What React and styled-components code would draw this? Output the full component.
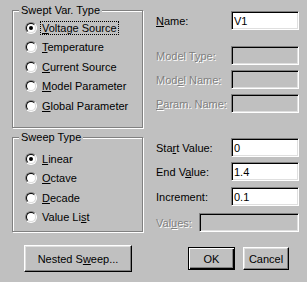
import React from "react"
import styled, { createGlobalStyle, css } from "styled-components"

const GlobalStyle = createGlobalStyle`
    body {
        margin: 0;
        background: #c0c0c0;
    }
`;

const Dialog = styled.div`
    width: 307px;
    height: 282px;
    box-sizing: border-box;
    background: #c0c0c0;
    display: flex;
    padding-left: 12px;
    font-family: "Liberation Sans", Arial, sans-serif;
    font-size: 11px;
    color: #000;
`;

const LeftCol = styled.div`
    width: 131px;
    display: flex;
    flex-direction: column;
    padding-top: 10px;
`;

const RightCol = styled.div`
    width: 143px;
    margin-left: 13px;
    display: flex;
    flex-direction: column;
    padding-top: 11px;
`;

// etched group box
const Group = styled.div`
    position: relative;
    margin-top: ${p => p.$mt || 0}px;
    padding: ${p => p.$pt}px 0 ${p => p.$pb}px 12px;
    border: 1px solid #808080;
    box-shadow: 1px 1px 0 #fff, inset 1px 1px 0 #fff;
`;

// caption sits over the top edge of the group box
const GroupTitle = styled.span`
    position: absolute;
    top: -8px;
    left: 6px;
    padding: 0 2px;
    line-height: 14px;
    background: #c0c0c0;
    white-space: nowrap;
`;

const RadioRow = styled.label`
    display: flex;
    align-items: center;
    gap: 3px;
    height: ${p => p.$h}px;
`;

const RadioOuter = styled.span`
    flex: none;
    width: 12px;
    height: 12px;
    box-sizing: border-box;
    border-radius: 50%;
    border: 1px solid;
    border-color: #808080 #fff #fff #808080;
    display: flex;
`;

const RadioInner = styled.span`
    flex: 1;
    border-radius: 50%;
    border: 1px solid;
    border-color: #000 #dfdfdf #dfdfdf #000;
    background: #fff;
    display: flex;
    align-items: center;
    justify-content: center;
    &::after {
        content: "";
        width: 4px;
        height: 4px;
        border-radius: 50%;
        background: ${p => (p.$checked ? "#000" : "transparent")};
    }
`;

const Caption = styled.span`
    padding: 0 1px;
    line-height: 12px;
    border: 1px dotted ${p => (p.$focus ? "#000" : "transparent")};
    white-space: nowrap;
`;

const Key = styled.u`
    text-decoration: underline;
    text-underline-offset: 1px;
`;

const FieldRow = styled.div`
    display: flex;
    align-items: center;
    height: 19px;
    margin-top: ${p => p.$mt || 0}px;
`;

const FieldLabel = styled.span`
    flex: 0 0 ${p => p.$w}px;
    white-space: nowrap;
    color: ${p => (p.$disabled ? "#808080" : "#000")};
    text-shadow: ${p => (p.$disabled ? "1px 1px 0 #fff" : "none")};
`;

const Edit = styled.input`
    flex: 1;
    min-width: 0;
    height: 19px;
    box-sizing: border-box;
    margin: 0;
    padding: 0 0 0 2px;
    border: 1px solid;
    border-color: #808080 #fff #fff #808080;
    box-shadow: inset 1px 1px 0 #000, inset -1px -1px 0 #dfdfdf;
    background: ${p => (p.disabled ? "#c0c0c0" : "#fff")};
    font: inherit;
    color: #000;
    outline: none;
`;

const Button = styled.button`
    width: ${p => p.$w}px;
    height: ${p => p.$h}px;
    margin: 0;
    padding: 0;
    font: inherit;
    color: #000;
    background: #c0c0c0;
    border: 1px solid;
    border-color: #fff #000 #000 #fff;
    box-shadow: inset -1px -1px 0 #808080, inset 1px 1px 0 #dfdfdf;
    ${p => p.$default && css`
        border-color: #000;
        box-shadow: inset 1px 1px 0 #fff, inset -1px -1px 0 #000, inset -2px -2px 0 #808080;
    `}
`;

const NestedButton = styled(Button)`
    margin: 13px 0 0 12px;
`;

const ButtonRow = styled.div`
    display: flex;
    gap: 8px;
    margin-top: 15px;
    padding-left: 32px;
`;

const SWEPT = [
    { pre: "", key: "V", post: "oltage Source", checked: true, focus: true },
    { pre: "", key: "T", post: "emperature" },
    { pre: "", key: "C", post: "urrent Source" },
    { pre: "", key: "M", post: "odel Parameter" },
    { pre: "", key: "G", post: "lobal Parameter" },
];

const SWEEP = [
    { pre: "", key: "L", post: "inear", checked: true },
    { pre: "", key: "O", post: "ctave" },
    { pre: "", key: "D", post: "ecade" },
    { pre: "Value Li", key: "s", post: "t" },
];

const Radio = ({ item, h }) => (
    <RadioRow $h={h}>
        <RadioOuter>
            <RadioInner $checked={item.checked} />
        </RadioOuter>
        <Caption $focus={item.focus}>
            {item.pre}<Key>{item.key}</Key>{item.post}
        </Caption>
    </RadioRow>
);

const App = () => (
    <Dialog>
        <GlobalStyle />
        <LeftCol>
            <Group $pt={7} $pb={11.5}>
                <GroupTitle>Swept Var. Type</GroupTitle>
                {SWEPT.map((item, i) => <Radio key={i} item={item} h={19.5} />)}
            </Group>
            <Group $mt={9} $pt={11.5} $pb={4.5}>
                <GroupTitle>Sweep Type</GroupTitle>
                {SWEEP.map((item, i) => <Radio key={i} item={item} h={19.25} />)}
            </Group>
            <NestedButton $w={108} $h={27}>
                Nested S<Key>w</Key>eep...
            </NestedButton>
        </LeftCol>
        <RightCol>
            <FieldRow>
                <FieldLabel $w={75}><Key>N</Key>ame:</FieldLabel>
                <Edit defaultValue="V1" />
            </FieldRow>
            <FieldRow $mt={16}>
                <FieldLabel $w={75} $disabled>Model T<Key>y</Key>pe:</FieldLabel>
                <Edit disabled />
            </FieldRow>
            <FieldRow $mt={5}>
                <FieldLabel $w={75} $disabled>Mod<Key>e</Key>l Name:</FieldLabel>
                <Edit disabled />
            </FieldRow>
            <FieldRow $mt={5}>
                <FieldLabel $w={75} $disabled><Key>P</Key>aram. Name:</FieldLabel>
                <Edit disabled />
            </FieldRow>
            <FieldRow $mt={25}>
                <FieldLabel $w={75}>Sta<Key>r</Key>t Value:</FieldLabel>
                <Edit defaultValue="0" />
            </FieldRow>
            <FieldRow $mt={5}>
                <FieldLabel $w={75}>End V<Key>a</Key>lue:</FieldLabel>
                <Edit defaultValue="1.4" />
            </FieldRow>
            <FieldRow $mt={6}>
                <FieldLabel $w={75}>Increment:</FieldLabel>
                <Edit defaultValue="0.1" />
            </FieldRow>
            <FieldRow $mt={7}>
                <FieldLabel $w={43} $disabled>Val<Key>u</Key>es:</FieldLabel>
                <Edit disabled />
            </FieldRow>
            <ButtonRow>
                <Button $w={47} $h={23} $default>OK</Button>
                <Button $w={46} $h={23}>Cancel</Button>
            </ButtonRow>
        </RightCol>
    </Dialog>
);

export default App;
